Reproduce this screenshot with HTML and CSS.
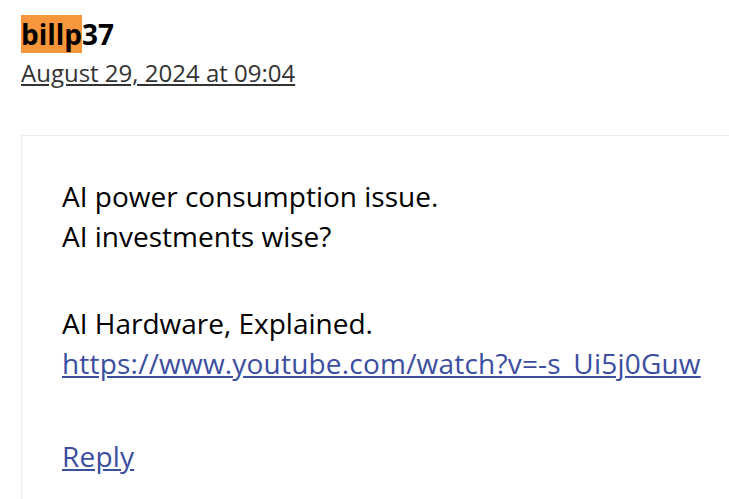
FILE: index.html
```html
<!DOCTYPE html>
<html lang="en">
<head>
    <meta charset="UTF-8">
    <meta name="viewport" content="width=device-width, initial-scale=1.0">
    <title>Comment</title>
    <link rel="stylesheet" href="styles.css">
</head>
<body>
    <article class="comment">
        <header class="comment-meta">
            <div class="author"><mark class="hl">billp</mark>37</div>
            <a class="date" href="#">August 29, 2024 at 09:04</a>
        </header>
        <div class="comment-body">
            <p>AI power consumption issue.<br>AI investments wise?</p>
            <p>AI Hardware, Explained.<br><a href="#">https://www.youtube.com/watch?v=-s_Ui5j0Guw</a></p>
            <div class="reply"><a href="#">Reply</a></div>
        </div>
    </article>
</body>
</html>
```

FILE: styles.css
```css
body { margin: 0; font-family: "Open Sans", "Noto Sans", sans-serif; color: #000; background: #fff; }
.comment { padding: 17px 0 0 21px; }
.comment-meta { margin-bottom: 47px; }
.author { font-size: 28px; font-weight: 700; line-height: 34px; }
.hl { background: #f7963a; color: #000; }
.date { display: block; margin-top: 7px; font-size: 24px; line-height: 30px; color: #333; width: max-content; }
.comment-body {
    border: 1px solid #ececec;
    border-right: none;
    padding: 40px 0 40px 40px;
    font-size: 28px;
    line-height: 40px;
}
.comment-body p { margin: 0 0 47px; }
.comment-body a { color: #3b4ea0; letter-spacing: 0.2px; }
.reply { margin-top: 53px; }
```
